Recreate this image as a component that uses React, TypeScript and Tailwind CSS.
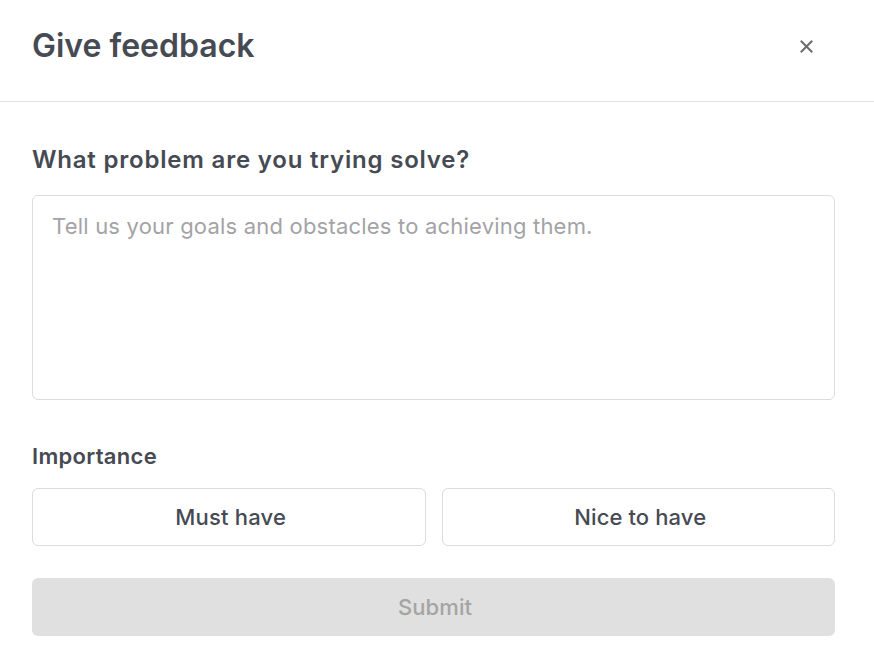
import React from 'react';

const font = { fontFamily: 'Inter, "Noto Sans", sans-serif' };

export default function App() {
  return (
    <div className="min-h-screen w-full bg-white" style={font}>
      <div className="flex h-[102px] items-start justify-between border-b border-[#e2e2e4] pl-8 pr-[60px] pt-[27px]">
        <h1 className="text-[32px] font-semibold leading-[38px] text-[#464a53]">Give feedback</h1>
        <button className="mt-[11px] flex h-4 w-4 items-center justify-center text-[#6b6b6e]" aria-label="Close">
          <svg width="13" height="13" viewBox="0 0 13 13" fill="none" stroke="currentColor" strokeWidth="2" strokeLinecap="square">
            <path d="M1.5 1.5l10 10M11.5 1.5l-10 10" />
          </svg>
        </button>
      </div>

      <div className="flex w-[867px] flex-col px-8 pt-[42px]">
        <label className="text-[24px] font-semibold leading-8 tracking-[0.8px] text-[#464a53]">What problem are you trying solve?</label>
        <textarea
          className="mt-[19px] h-[205px] w-full resize-none rounded-md border border-[#dcdcde] px-[19px] pt-4 pb-[14px] text-[22px] leading-7 tracking-[0.2px] text-[#464a53] placeholder:text-[#a3a3a6] outline-none"
          placeholder="Tell us your goals and obstacles to achieving them."
        />

        <span className="mt-[42px] text-[22px] font-semibold leading-7 tracking-[0.3px] text-[#464a53]">Importance</span>
        <div className="mt-[18px] grid grid-cols-2 gap-4">
          <button className="h-[58px] rounded-md border border-[#dcdcde] pl-1 text-[22px] font-medium tracking-[0.2px] text-[#464a53]">Must have</button>
          <button className="h-[58px] rounded-md border border-[#dcdcde] pl-1 text-[22px] font-medium tracking-[0.1px] text-[#464a53]">Nice to have</button>
        </div>

        <button disabled className="mt-8 h-[58px] rounded-md bg-[#e0e0e0] pl-[3px] text-[22px] font-medium tracking-[0.1px] text-[#a4a4a4]">Submit</button>
      </div>
    </div>
  );
}
